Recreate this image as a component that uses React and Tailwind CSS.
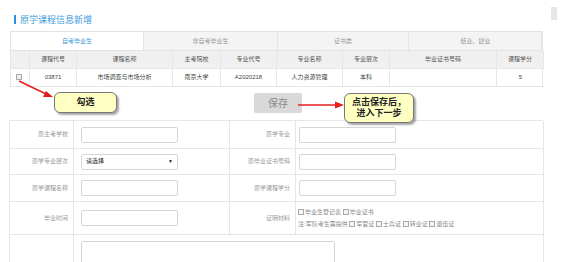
import React from 'react';

const tabs = ['自考毕业生', '非自考毕业生', '证书类', '结业、肄业'];
const heads = ['', '课程代号', '课程名称', '主考院校', '专业代号', '专业名称', '专业层次', '毕业证书号码', '课程学分'];
const row = ['03871', '市场调查与市场分析', '南京大学', 'A2020218', '人力资源管理', '本科', '', '5'];

const Box = () => (
    <span className="inline-block w-[6px] h-[6px] border border-[#aaa] bg-[#f4f4f4] align-middle mr-[1px]" />
);

const Label = ({ children, h }) => (
    <div className={`flex items-center justify-end pr-[5px] border-r border-b border-[#e6e6e6] text-[6px] text-[#999] ${h}`}>
        {children}
    </div>
);

const Field = ({ children, h, pl = 'pl-[7px]' }) => (
    <div className={`flex items-center border-r border-b border-[#e6e6e6] ${pl} ${h}`}>{children}</div>
);

const Input = () => <div className="w-[97px] h-[16px] border border-[#d6d6d6] rounded-[2px] bg-white" />;

const Callout = ({ className, children }) => (
    <div className={`absolute bg-[#ffffc4] border border-[#777] rounded-[6px] shadow-[2px_2px_2px_rgba(0,0,0,0.35)] flex flex-col items-center justify-center text-[9px] font-bold text-[#222] leading-[11px] ${className}`}>
        {children}
    </div>
);

export default function App() {
    return (
        <div className="relative w-[582px] h-[262px] bg-white overflow-hidden font-['Liberation_Sans','Noto_Sans_CJK_SC',sans-serif]">
            <div className="pt-[13px] pl-[9px]">
                {/* title */}
                <div className="flex items-center gap-[4px] ml-[5px] h-[13px]">
                    <span className="w-[2px] h-[9px] bg-[#2d8fd8]" />
                    <span className="text-[9px] text-[#3b9ad9] leading-[12px]">原学课程信息新增</span>
                </div>

                <div className="ml-[1px] w-[533px] mt-[5px] border-r border-[#e6e6e6]">
                    {/* tabs */}
                    <div className="grid grid-cols-[132px_134px_131px_134px] h-[20px] border border-[#e3e3e3] bg-[#f4f4f4]">
                        {tabs.map((t, i) => (
                            <div
                                key={t}
                                className={`flex items-center justify-center text-[6px] ${i === 0 ? 'bg-white text-[#3a9ad9]' : 'text-[#999] border-l border-[#e3e3e3]'}`}
                            >
                                {t}
                            </div>
                        ))}
                    </div>

                    {/* course table */}
                    <div className="grid grid-cols-[19px_47px_96px_48px_56px_66px_47px_107px_47px] border-l border-[#e6e6e6]">
                        {heads.map((h, i) => (
                            <div key={i} className="h-[18px] flex items-center justify-center bg-[#f0f0f0] border-b border-r border-[#e6e6e6] text-[6px] text-[#555]">
                                {h}
                            </div>
                        ))}
                        <div className="h-[18px] flex items-center justify-center border-b border-r border-[#e6e6e6]">
                            <span className="w-[6px] h-[6px] border border-[#aaa] bg-[#eee] -mt-[2px] -ml-[3px]" />
                        </div>
                        {row.map((c, i) => (
                            <div key={i} className={`h-[18px] flex items-center justify-center border-b border-[#e6e6e6] text-[6px] text-[#444] ${i < row.length - 1 ? 'border-r' : ''}`}>
                                {c}
                            </div>
                        ))}
                    </div>
                </div>

                {/* save */}
                <div className="w-[534px] flex justify-center pt-[6px] pb-[7px]">
                    <button className="w-[48px] h-[20px] bg-[#d9d9d9] rounded-[2px] text-[10px] text-[#8a8a8a] ml-[4px]">保存</button>
                </div>

                {/* form */}
                <div className="w-[534px] grid grid-cols-[64px_156px_66px_248px] border-t border-l border-[#e6e6e6]">
                    <Label h="h-[28px]">原主考学校</Label>
                    <Field h="h-[28px]"><Input /></Field>
                    <Label h="h-[28px]">原学专业</Label>
                    <Field h="h-[28px]" pl="pl-[3px]"><Input /></Field>

                    <Label h="h-[26px]">原学专业层次</Label>
                    <Field h="h-[26px]">
                        <div className="w-[97px] h-[16px] border border-[#d6d6d6] rounded-[2px] flex items-center justify-between px-[4px] text-[6px] text-[#222]">
                            <span>请选择</span>
                            <span className="text-[5px]">▼</span>
                        </div>
                    </Field>
                    <Label h="h-[26px]">原毕业证书号码</Label>
                    <Field h="h-[26px]" pl="pl-[3px]"><Input /></Field>

                    <Label h="h-[27px]">原学课程名称</Label>
                    <Field h="h-[27px]"><Input /></Field>
                    <Label h="h-[27px]">原学课程学分</Label>
                    <Field h="h-[27px]" pl="pl-[3px]"><Input /></Field>

                    <Label h="h-[33px]">毕业时间</Label>
                    <Field h="h-[33px]"><Input /></Field>
                    <Label h="h-[33px]">证明材料</Label>
                    <div className="h-[33px] flex flex-col justify-center gap-[4px] pl-[2px] border-r border-b border-[#e6e6e6] text-[6px] text-[#888] leading-[8px]">
                        <div><Box />毕业生登记表 <Box />毕业证书</div>
                        <div>注:军队考生需提供 <Box />军官证 <Box />士兵证 <Box />转业证 <Box />退伍证</div>
                    </div>

                    <div className="h-[40px] border-r border-[#e6e6e6]" />
                    <div className="col-span-3 h-[40px] border-r border-[#e6e6e6] pl-[7px] pt-[6px]">
                        <div className="w-[254px] h-[30px] border border-[#d6d6d6] rounded-[2px]" />
                    </div>
                </div>
            </div>

            {/* scrollbar thumb */}
            <div className="absolute left-[551px] top-[7px] w-[6px] h-[13px] bg-[#e6e6e6]" />

            {/* arrows */}
            <svg className="absolute left-0 top-0 pointer-events-none" width="582" height="262">
                <line x1="19" y1="81" x2="46" y2="94" stroke="#e41e1e" strokeWidth="1.5" />
                <polygon points="53,97 43,97 46,91" fill="#e41e1e" />
                <line x1="298" y1="105" x2="336" y2="105" stroke="#e41e1e" strokeWidth="1.5" />
                <polygon points="344,105 335,101.5 335,108.5" fill="#e41e1e" />
            </svg>

            <Callout className="left-[54px] top-[92px] w-[63px] h-[21px]">勾选</Callout>
            <Callout className="left-[344px] top-[93px] w-[70px] h-[30px]">
                <span>点击保存后，</span>
                <span>进入下一步</span>
            </Callout>
        </div>
    );
}
